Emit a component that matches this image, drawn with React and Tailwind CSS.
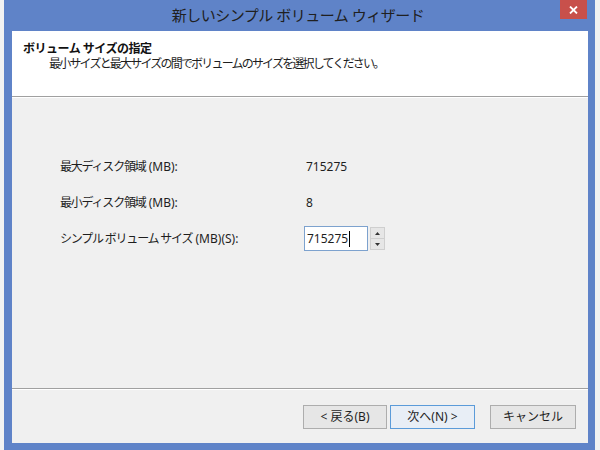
import React from 'react';

const font = { fontFamily: '"Noto Sans", "Noto Sans CJK JP", sans-serif' };

const Row = ({ jp, latin, children, className = '' }) => (
    <div className={`flex items-center ${className}`}>
        <div className="w-[244px] text-[12px] text-[#1e1e1e]">
            <span className="tracking-[-1.2px]">{jp}</span> {latin}
        </div>
        {children}
    </div>
);

const Btn = ({ children, primary, className = '' }) => (
    <button
        className={`h-[24px] text-[12px] text-[#1e1e1e] border ${primary ? 'border-[#5b9bd9] bg-[#e8eef6]' : 'border-[#adadad] bg-[#e6e6e6]'} ${className}`}
    >
        {children}
    </button>
);

export default function App() {
    return (
        <div className="w-[600px] h-[450px] bg-[#f2f2f2] overflow-hidden" style={font}>
            <div className="relative ml-[4px] w-[591px] h-[450px] bg-[#5f83c8] flex flex-col pl-[8px] pr-[7px] pb-[7px]">
                {/* title bar */}
                <div className="h-[31px] flex items-center justify-center text-[15px] tracking-[-0.5px] text-[#202020] pr-[4px]">
                    新しいシンプル ボリューム ウィザード
                </div>
                <button className="absolute top-0 right-[8px] w-[27px] h-[19px] bg-[#c8504b] flex items-center justify-center">
                    <svg width="9" height="8" viewBox="0 0 9 8">
                        <path d="M1 0.5 L8 7.5 M8 0.5 L1 7.5" stroke="#fff" strokeWidth="1.8" />
                    </svg>
                </button>

                {/* client */}
                <div className="flex-1 flex flex-col bg-[#f0f0f0]">
                    <div className="h-[66px] bg-white border-b border-[#a0a0a0] pl-[11px] pt-[10px]">
                        <div className="text-[12px] font-bold tracking-[-0.5px] text-[#111] leading-[15px]">ボリューム サイズの指定</div>
                        <div className="text-[12px] tracking-[-1.8px] text-[#1e1e1e] leading-[15px] pl-[26px]">最小サイズと最大サイズの間でボリュームのサイズを選択してください。</div>
                    </div>
                    <div className="h-px bg-white" />

                    <div className="flex-1 pl-[48px] pt-[59px] border-b border-[#a0a0a0]">
                        <Row jp="最大ディスク領域" latin="(MB):" className="h-[20px]">
                            <div className="ml-[2px] text-[12px] text-[#1e1e1e]">715275</div>
                        </Row>
                        <Row jp="最小ディスク領域" latin="(MB):" className="h-[20px] mt-[16px]">
                            <div className="ml-[2px] text-[12px] text-[#1e1e1e]">8</div>
                        </Row>
                        <Row jp="シンプル ボリューム サイズ" latin="(MB)(S):" className="h-[25px] mt-[13px]">
                            <div className="w-[64px] h-[25px] bg-white border border-[#7da2ce] flex items-center pl-[2px] text-[12px] text-[#1e1e1e]">
                                715275
                                <span className="inline-block w-px h-[16px] bg-black ml-[1px]" />
                            </div>
                            <div className="ml-[2px] w-[15px] h-[23px] flex flex-col border border-[#cfcfcf] bg-[#e6e6e6]">
                                <div className="flex-1 flex items-center justify-center border-b border-[#cfcfcf]">
                                    <svg width="5" height="3" viewBox="0 0 5 3"><path d="M2.5 0 L5 3 L0 3 Z" fill="#333" /></svg>
                                </div>
                                <div className="flex-1 flex items-center justify-center">
                                    <svg width="5" height="3" viewBox="0 0 5 3"><path d="M0 0 L5 0 L2.5 3 Z" fill="#333" /></svg>
                                </div>
                            </div>
                        </Row>
                    </div>
                    <div className="h-px bg-white" />

                    <div className="h-[53px] flex justify-end pr-[12px] pt-[15px]">
                        <Btn className="w-[84px]">&lt; 戻る(B)</Btn>
                        <Btn primary className="w-[85px] ml-[3px]">次へ(N) &gt;</Btn>
                        <Btn className="w-[86px] ml-[15px]">キャンセル</Btn>
                    </div>
                </div>
            </div>
        </div>
    );
}
